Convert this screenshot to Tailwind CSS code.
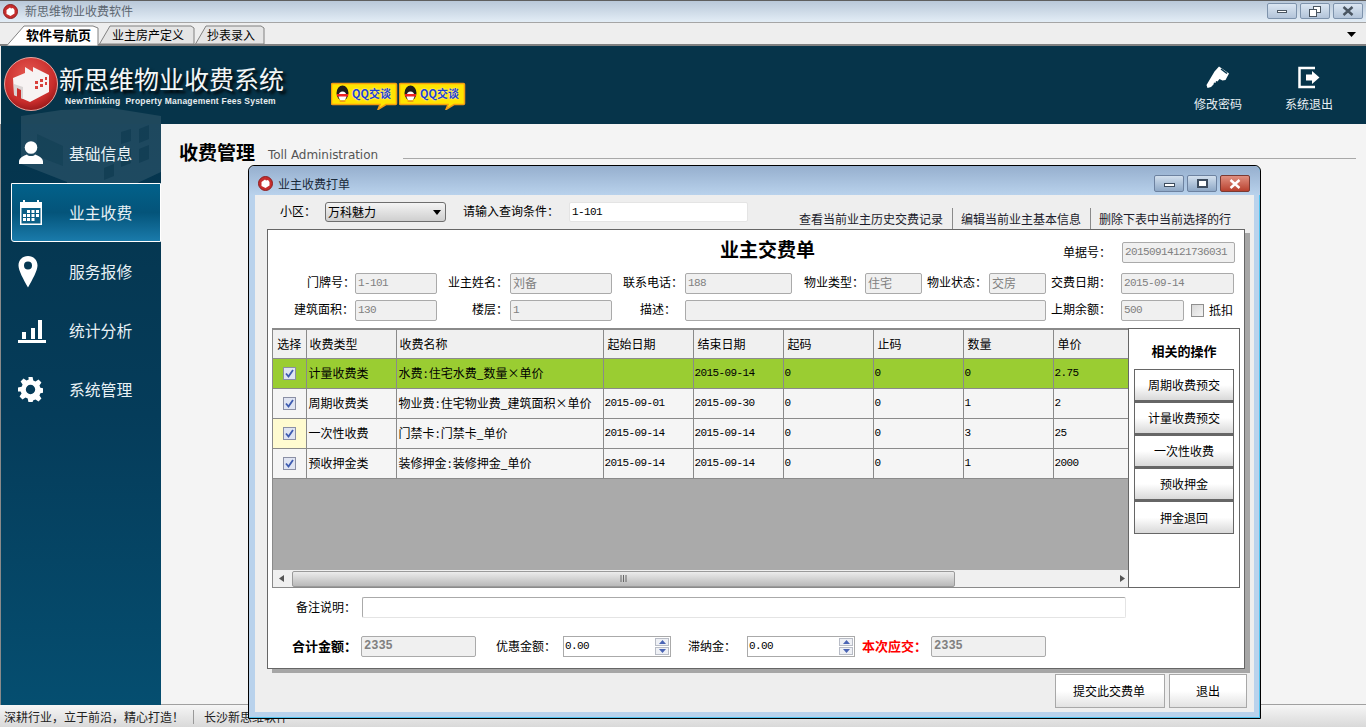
<!DOCTYPE html>
<html lang="zh-CN">
<head>
<meta charset="utf-8">
<title>新思维物业收费软件</title>
<script src="https://cdn.jsdelivr.net/npm/@tailwindcss/browser@4"></script>
</head>
<body class="bg-[#eeeeee]">
<div class="relative w-[1366px] h-[727px] overflow-hidden flex flex-col bg-[#eeeeee] text-black text-[12px] leading-[14px] font-['Noto_Sans_CJK_SC','Liberation_Sans',sans-serif]">

  <!-- window title bar -->
  <div class="h-[22px] shrink-0 flex items-center border-t border-[#5f5f5f] bg-gradient-to-b from-[#b9c8d9] to-[#e3edf6]">
    <svg class="ml-[3px] w-[15px] h-[15px]" viewBox="0 0 15 15"><circle cx="7.5" cy="7.5" r="7" fill="#c62d2d" stroke="#8d1f1f"/><path d="M3.5 6L7 3.5l1 1 2-.5 1.5 2v3.5L7.5 12 3.5 10z" fill="#fff"/></svg>
    <span class="ml-[7px] pb-[2px] text-[#5c6670] text-[12px]">新思维物业收费软件</span>
    <div class="ml-auto mr-[3px] flex gap-[3px] -mt-[1px]">
      <div class="w-[30px] h-[16px] flex items-center justify-center rounded-[2px] border border-[#7e93ac] bg-gradient-to-b from-[#dbe6f2] to-[#b3c4d9]"><div class="w-[10px] h-[3px] bg-white border border-[#4a5561]"></div></div>
      <div class="w-[30px] h-[16px] flex items-center justify-center rounded-[2px] border border-[#7e93ac] bg-gradient-to-b from-[#dbe6f2] to-[#b3c4d9]"><svg class="w-[12px] h-[11px]" viewBox="0 0 12 11"><rect x="4.5" y=".5" width="7" height="6" fill="#fff" stroke="#4a5561"/><rect x=".5" y="3.5" width="7" height="7" fill="#fff" stroke="#4a5561"/></svg></div>
      <div class="w-[30px] h-[16px] flex items-center justify-center rounded-[2px] border border-[#7e93ac] bg-gradient-to-b from-[#dbe6f2] to-[#b3c4d9]"><svg class="w-[12px] h-[10px]" viewBox="0 0 12 10"><path d="M1.500 1l9 8M10.500 1l-9 8" stroke="#4a5561" stroke-width="2.400"/></svg></div>
    </div>
  </div>

  <!-- tabs -->
  <div class="h-[24px] shrink-0 flex items-end bg-[#eeeeee] border-t border-[#a5a5a5] border-b-2 border-b-[#808080]">
    <div class="relative w-[93px] h-[19px] ml-[6px] font-bold text-[13px] flex items-center">
      <svg class="absolute left-0 -bottom-[2px] w-[93px] h-[21px]" viewBox="0 0 93 21"><path d="M.5 21L18 1h69l5 2v18z" fill="#fff" stroke="#808080"/></svg>
      <span class="relative ml-[20px]">软件号航页</span>
    </div>
    <div class="relative w-[96px] h-[19px] flex items-center">
      <svg class="absolute left-0 top-0 w-[96px] h-[19px]" viewBox="0 0 96 19"><path d="M.5 19L11 1h81l3 2v16z" fill="#e5e5e5" stroke="#808080"/></svg>
      <span class="relative ml-[13px]">业主房产定义</span>
    </div>
    <div class="relative w-[70px] h-[19px] flex items-center">
      <svg class="absolute left-0 top-0 w-[70px] h-[19px]" viewBox="0 0 70 19"><path d="M.5 19L11 1h55l3 2v16z" fill="#e5e5e5" stroke="#808080"/></svg>
      <span class="relative ml-[12px]">抄表录入</span>
    </div>
    <svg class="ml-auto mr-[10px] mb-[7px] w-[9px] h-[5px]" viewBox="0 0 9 5"><path d="M0 0h9L4.500 5z" fill="#000"/></svg>
  </div>

  <!-- header + body background -->
  <div class="relative flex-1 flex flex-col min-h-0">
    <header class="relative z-10 h-[78px] shrink-0 ml-[1px] bg-[#06344a] flex">
      <svg class="absolute left-0 top-[56px] w-[160px] h-[22px]" viewBox="0 0 160 22"><path d="M20 22V14L60 8l50-2 50 8v8z" fill="#fff" fill-opacity=".1"/></svg>
      <svg class="relative ml-[2px] mt-[10px] w-[56px] h-[56px]" viewBox="0 0 56 56">
        <defs><radialGradient id="lg" cx=".45" cy=".35" r=".7"><stop offset="0" stop-color="#e65a52"/><stop offset=".7" stop-color="#c92d2c"/><stop offset="1" stop-color="#8e1416"/></radialGradient></defs>
        <circle cx="28" cy="28" r="26.500" fill="url(#lg)" stroke="#e9a6a0"/>
        <path d="M10 22l12-5v-6l8 5v-5l16 8v17L27 46 11 39z" fill="#f7f3f3"/>
        <path d="M11 39V28l9 3v12z" fill="#d9d4d4"/><path d="M14 41v-9l4 2v9z" fill="#c92d2c"/>
        <g fill="#d8403c"><rect x="32" y="25" width="3" height="3"/><rect x="37" y="23" width="3" height="3"/><rect x="42" y="21" width="2" height="3"/><rect x="32" y="30" width="3" height="3"/><rect x="37" y="28" width="3" height="3"/><rect x="42" y="26" width="2" height="3"/></g>
      </svg>
      <div class="relative w-[261px]">
        <div class="mt-[15px] text-[25px] leading-[34px] text-[#f3f6f7] [text-shadow:3px_3px_3px_#000]">新思维物业收费系统</div>
        <div class="ml-[6px] mt-[1px] text-[8.500px] leading-[11px] tracking-[.22px] font-bold whitespace-pre text-[#e6edf0] font-['Liberation_Sans',sans-serif]">NewThinking  Property Management Fees System</div>
      </div>

      <div class="relative ml-[11px] mt-[36px] flex h-[28px]">
        <div class="relative w-[68px] h-[28px]">
          <svg class="absolute inset-0 w-[68px] h-[28px]" viewBox="0 0 68 28"><path d="M1.500 1.500h63a1 1 0 0 1 1 1v19a1 1 0 0 1-1 1H55l-8 5 2-5H1.500a1 1 0 0 1-1-1v-19a1 1 0 0 1 1-1z" fill="#ffe400" stroke="#f39c12" stroke-width="1.500"/><ellipse cx="11.500" cy="11" rx="6" ry="7.500" fill="#1c1c1c"/><ellipse cx="11.500" cy="14" rx="4" ry="4.500" fill="#fff"/><path d="M6 12h11v2.500H6z" fill="#e22"/><path d="M8 18.500h7l-1 1.500H9z" fill="#f39c12"/></svg>
          <span class="absolute left-[21px] top-[5px] text-[11px] leading-[13px] font-bold text-[#1f3fd0] [text-shadow:0_0_2px_#fff]">QQ交谈</span>
        </div>
        <div class="relative w-[68px] h-[28px]">
          <svg class="absolute inset-0 w-[68px] h-[28px]" viewBox="0 0 68 28"><path d="M1.500 1.500h63a1 1 0 0 1 1 1v19a1 1 0 0 1-1 1H55l-8 5 2-5H1.500a1 1 0 0 1-1-1v-19a1 1 0 0 1 1-1z" fill="#ffe400" stroke="#f39c12" stroke-width="1.500"/><ellipse cx="11.500" cy="11" rx="6" ry="7.500" fill="#1c1c1c"/><ellipse cx="11.500" cy="14" rx="4" ry="4.500" fill="#fff"/><path d="M6 12h11v2.500H6z" fill="#e22"/><path d="M8 18.500h7l-1 1.500H9z" fill="#f39c12"/></svg>
          <span class="absolute left-[21px] top-[5px] text-[11px] leading-[13px] font-bold text-[#1f3fd0] [text-shadow:0_0_2px_#fff]">QQ交谈</span>
        </div>
      </div>

      <div class="ml-auto mr-[33px] flex gap-[43px] text-[#e8eff3]">
        <div class="w-[48px] flex flex-col items-center">
          <svg class="mt-[19px] w-[24px] h-[24px]" viewBox="0 0 24 24"><path d="M8.500 6.500L13 1.500l10 7-3.500 6.500-3 .5-3-1.500-2 2.500-1.500-.5-.5 2-1.500-.5-.5 2-2.500 2.500L1.500 23 .5 20z" fill="#fff"/><path d="M15 4l6 4.500" stroke="#06344a" stroke-width="1.500"/></svg>
          <span class="mt-[8px]">修改密码</span>
        </div>
        <div class="w-[48px] flex flex-col items-center">
          <svg class="mt-[19px] w-[24px] h-[24px]" viewBox="0 0 24 24"><path d="M18 3H2.500v19H18" fill="none" stroke="#fff" stroke-width="2.500"/><path d="M9 9.500h6V6l7.500 6.500L15 19v-3.500H9z" fill="#fff"/></svg>
          <span class="mt-[8px]">系统退出</span>
        </div>
      </div>
    </header>

    <div class="flex-1 flex min-h-0">
      <!-- sidebar -->
      <aside class="relative w-[161px] shrink-0 border-l border-[#8a8a8a] bg-gradient-to-b from-[#05344c] via-[#053c5a] to-[#054e70] text-[15.800px] leading-[20px] text-[#e8f1f5]">
        <svg class="absolute left-0 top-0 w-[160px] h-[80px]" viewBox="0 0 160 80"><path d="M20 0h140v48L100 76 66 62V58L20 40z" fill="#fff" fill-opacity=".1"/><g fill="#06344a" fill-opacity=".45"><path d="M36 10l26 12v20l-26-10z" fill-opacity=".3"/><path d="M103 44l10-4v12l-10 4zM120 29l10-4v14l-10 4zM138 5l10-4v14l-10 4zM120 8l10-3v12l-10 3zM138 25l10-4v14l-10 4z"/></g></svg>
        <nav class="relative flex flex-col">
          <a class="h-[59px] flex items-center">
            <svg class="ml-[17px] w-[26px] h-[24px] -mt-[1px]" viewBox="0 0 26 24"><circle cx="13" cy="6.500" r="6.300" fill="#fff"/><path d="M1 23v-2.500C1 17 6 14.500 9 13.500c1 2 7 2 8 0 3 1 8 3.500 8 7V23z" fill="#fff"/></svg>
            <span class="ml-[25px]">基础信息</span>
          </a>
          <a class="ml-[10px] h-[59px] flex items-center border border-white rounded-bl-[3px] bg-gradient-to-b from-[#02618a] via-[#04547a] to-[#1a7bab]">
            <svg class="ml-[7px] w-[24px] h-[25px]" viewBox="0 0 24 25"><path d="M1 2h3V0h2v2h12V0h2v2h3v23H1z" fill="#fff"/><rect x="2.500" y="8" width="19" height="15.500" fill="#0b5f86"/><g fill="#fff"><rect x="8" y="10" width="3" height="3"/><rect x="12.500" y="10" width="3" height="3"/><rect x="17" y="10" width="3" height="3"/><rect x="4" y="14" width="3" height="3"/><rect x="8" y="14" width="3" height="3"/><rect x="12.500" y="14" width="3" height="3"/><rect x="17" y="14" width="3" height="3"/><rect x="4" y="18" width="3" height="3"/><rect x="8" y="18" width="3" height="3"/><rect x="12.500" y="18" width="3" height="3"/></g></svg>
            <span class="ml-[26px]">业主收费</span>
          </a>
          <a class="h-[59px] flex items-center">
            <svg class="ml-[17px] w-[20px] h-[32px]" viewBox="0 0 20 32"><path fill-rule="evenodd" d="M10 0c5.500 0 9.500 4 9.500 9.500 0 5-5 14-9.500 22C5.500 23.500.500 14.500.500 9.500.500 4 4.500 0 10 0zm0 5.500a4 4 0 1 0 0 8 4 4 0 0 0 0-8z" fill="#fff"/></svg>
            <span class="ml-[31px]">服务报修</span>
          </a>
          <a class="h-[59px] flex items-center">
            <svg class="ml-[17px] w-[29px] h-[24px]" viewBox="0 0 29 24"><path d="M4 13h4v7H4zM13 9h4v11h-4zM20 1h4v19h-4z" fill="#fff"/><rect y="21" width="28" height="3" fill="#fff"/></svg>
            <span class="ml-[22px]">统计分析</span>
          </a>
          <a class="h-[59px] flex items-center">
            <svg class="ml-[17px] w-[25px] h-[25px]" viewBox="0 0 24 24"><path fill-rule="evenodd" d="M10 0h4l.7 3.400 2.100.9L19.700 2.400l2.800 2.800-1.900 2.900.9 2.100 3.500.7v4l-3.500.7-.9 2.100 1.900 2.900-2.800 2.800-2.900-1.900-2.100.9L14 24h-4l-.7-3.400-2.100-.9-2.900 1.900-2.800-2.800 1.900-2.900-.9-2.100L0 14v-4l3.500-.7.900-2.100-1.900-2.900 2.800-2.800 2.900 1.900 2.100-.9zM12 7.500a4.500 4.500 0 1 0 0 9 4.500 4.500 0 0 0 0-9z" fill="#fff"/></svg>
            <span class="ml-[26px]">系统管理</span>
          </a>
        </nav>
      </aside>

      <!-- content area -->
      <main class="flex-1 min-w-0 bg-[#f4f4f4] border-b border-[#a0a0a0] pt-[16px] pl-[18px] pr-[10px] flex items-start">
        <h1 class="font-bold text-[19px] leading-[24px] shrink-0">收费管理</h1>
        <span class="ml-[13px] mt-[7px] text-[12px] leading-[16px] text-[#555] tracking-[-.05px] font-['DejaVu_Sans',sans-serif] shrink-0">Toll Administration</span>
        <div class="ml-[25px] mt-[18px] flex-1 h-px bg-[#a8a8a8]"></div>
      </main>
    </div>

    <!-- status bar -->
    <footer class="h-[22px] shrink-0 flex items-center pl-[4px] pt-[1px] bg-gradient-to-b from-[#f6f6f6] to-[#d9d9d9] text-[#222]">
      <span>深耕行业，立于前沿，精心打造！</span>
      <span class="ml-[9px] w-px h-[14px] bg-[#999]"></span>
      <span class="ml-[10px]">长沙新思维软件</span>
    </footer>
  </div>

  <!-- dialog window -->
  <section class="absolute left-[248px] top-[165px] w-[1013px] h-[554px] z-20 flex flex-col border border-black rounded-t-[6px] bg-[#b9d2ec] shadow-[inset_-1px_-1px_0_#4fc3ef]">
    <div class="h-[29px] shrink-0 flex items-center pt-[6px] rounded-t-[6px] bg-gradient-to-b from-[#96afce] to-[#b9d2ec]">
      <svg class="ml-[9px] w-[15px] h-[15px]" viewBox="0 0 15 15"><circle cx="7.500" cy="7.500" r="7" fill="#c62d2d" stroke="#8d1f1f"/><path d="M3.500 6L7 3.500l1 1 2-.5 1.500 2v3.500L7.500 12 3.500 10z" fill="#fff"/></svg>
      <span class="ml-[5px] text-[#1a2a3a]">业主收费打单</span>
      <div class="ml-auto mr-[10px] flex gap-[3px]">
        <div class="w-[30px] h-[17px] flex items-center justify-center rounded-[2px] border border-[#6d82a0] bg-gradient-to-b from-[#d3e0ee] to-[#8ea8c6]"><div class="w-[11px] h-[4px] mt-[3px] bg-white border border-[#3d4c5e]"></div></div>
        <div class="w-[30px] h-[17px] flex items-center justify-center rounded-[2px] border border-[#6d82a0] bg-gradient-to-b from-[#d3e0ee] to-[#8ea8c6]"><div class="w-[11px] h-[9px] bg-white border-2 border-[#3d4c5e] flex items-center justify-center"></div></div>
        <div class="w-[30px] h-[17px] flex items-center justify-center rounded-[2px] border border-[#7b3a33] bg-gradient-to-b from-[#e08f80] to-[#b8402e]"><svg class="w-[12px] h-[10px]" viewBox="0 0 12 10"><path d="M1.500 1l9 8M10.500 1l-9 8" stroke="#fff" stroke-width="2.400"/></svg></div>
      </div>
    </div>

    <div class="mx-[6px] h-[517px] shrink-0 bg-[#eeeeee] flex flex-col">
      <!-- toolbar -->
      <div class="h-[34px] shrink-0 flex items-start pl-[25px]">
        <span class="mt-[9px] w-[45px]">小区：</span>
        <div class="mt-[7px] w-[121px] h-[20px] flex items-center rounded-[3px] border border-[#6e6e6e] bg-gradient-to-b from-[#f4f4f4] to-[#cfcfcf] pl-[2px]">
          <span>万科魅力</span>
          <svg class="ml-auto mr-[4px] w-[8px] h-[5px]" viewBox="0 0 8 5"><path d="M0 0h8L4 5z" fill="#000"/></svg>
        </div>
        <span class="mt-[9px] ml-[17px] w-[106px]">请输入查询条件：</span>
        <div class="mt-[7px] w-[179px] h-[20px] bg-white rounded-[2px] border border-[#e4e4e4] flex items-center pl-[2px]"><span class="font-['Liberation_Mono',monospace] text-[11px] tracking-[-.6px]">1-101</span></div>
        <div class="ml-auto mr-[23px] mt-[13px] h-[21px] flex items-center text-[#1b1b2b]">
          <span>查看当前业主历史交费记录</span>
          <span class="ml-[9px] mr-[8px] w-px h-[21px] bg-[#8a8a8a]"></span>
          <span>编辑当前业主基本信息</span>
          <span class="ml-[9px] mr-[8px] w-px h-[21px] bg-[#8a8a8a]"></span>
          <span>删除下表中当前选择的行</span>
        </div>
      </div>

      <!-- sheet -->
      <div class="ml-[12px] w-[978px] h-[440px] shrink-0 bg-white border border-[#666] shadow-[5px_4px_0_#a6a6a6] flex flex-col">
        <div class="mt-[12px] h-[21px] flex items-center shrink-0">
          <h2 class="ml-[452px] font-bold text-[19px] leading-[20px] -mt-[7px] whitespace-nowrap">业主交费单</h2>
          <span class="ml-auto -mt-[2px]">单据号：</span>
          <div class="ml-[11px] mr-[9px] w-[113px] h-[21px] pb-[2px] bg-[#f0f0f0] border border-[#aaa] rounded-[2px] flex items-center pl-[2px] text-[#808080] font-['Liberation_Mono',monospace] text-[11px] tracking-[-.6px]">20150914121736031</div>
        </div>

        <!-- fields -->
        <div class="mt-[10px] grid grid-cols-[87px_82px_73px_102px_73px_107px_73px_57px_67px_57px_75px_113px] grid-rows-[21px_21px] gap-y-[6px] shrink-0 items-center whitespace-nowrap">
          <span class="-mt-[3px] text-right pr-[0px]">门牌号：</span>
          <div class="h-[21px] pb-[2px] bg-[#f0f0f0] border border-[#aaa] rounded-[2px] flex items-center pl-[2px] text-[#808080] font-['Liberation_Mono',monospace] text-[11px] tracking-[-.6px]">1-101</div>
          <span class="-mt-[3px] text-right pr-[2px]">业主姓名：</span>
          <div class="h-[21px] pb-[2px] bg-[#f0f0f0] border border-[#aaa] rounded-[2px] flex items-center pl-[2px] text-[#808080]">刘备</div>
          <span class="-mt-[3px] text-right pr-[2px]">联系电话：</span>
          <div class="h-[21px] pb-[2px] bg-[#f0f0f0] border border-[#aaa] rounded-[2px] flex items-center pl-[2px] text-[#808080] font-['Liberation_Mono',monospace] text-[11px] tracking-[-.6px]">188</div>
          <span class="-mt-[3px] text-right pr-[1px]">物业类型：</span>
          <div class="h-[21px] pb-[2px] bg-[#f0f0f0] border border-[#aaa] rounded-[2px] flex items-center pl-[2px] text-[#808080]">住宅</div>
          <span class="-mt-[3px] text-right pr-[2px]">物业状态：</span>
          <div class="h-[21px] pb-[2px] bg-[#f0f0f0] border border-[#aaa] rounded-[2px] flex items-center pl-[2px] text-[#808080]">交房</div>
          <span class="-mt-[3px] text-right pr-[10px]">交费日期：</span>
          <div class="h-[21px] pb-[2px] bg-[#f0f0f0] border border-[#aaa] rounded-[2px] flex items-center pl-[2px] text-[#808080] font-['Liberation_Mono',monospace] text-[11px] tracking-[-.6px]">2015-09-14</div>

          <span class="-mt-[3px] text-right pr-[1px]">建筑面积：</span>
          <div class="h-[21px] pb-[2px] bg-[#f0f0f0] border border-[#aaa] rounded-[2px] flex items-center pl-[2px] text-[#808080] font-['Liberation_Mono',monospace] text-[11px] tracking-[-.6px]">130</div>
          <span class="-mt-[3px] text-right pr-[2px]">楼层：</span>
          <div class="h-[21px] pb-[2px] bg-[#f0f0f0] border border-[#aaa] rounded-[2px] flex items-center pl-[2px] text-[#808080] font-['Liberation_Mono',monospace] text-[11px] tracking-[-.6px]">1</div>
          <span class="-mt-[3px] text-right pr-[9px]">描述：</span>
          <div class="col-span-5 h-[21px] bg-[#f0f0f0] border border-[#aaa] rounded-[2px]"></div>
          <span class="-mt-[3px] col-start-11 text-right pr-[10px]">上期余额：</span>
          <div class="flex items-center">
            <div class="w-[63px] h-[21px] pb-[2px] bg-[#f0f0f0] border border-[#aaa] rounded-[2px] flex items-center pl-[2px] text-[#808080] font-['Liberation_Mono',monospace] text-[11px] tracking-[-.6px]">500</div>
            <div class="ml-[7px] w-[13px] h-[13px] border border-[#8f8f8f] bg-gradient-to-br from-[#d8d8d8] to-[#f4f4f4]"></div>
            <span class="ml-[5px] -mt-[2px]">抵扣</span>
          </div>
        </div>

        <!-- grid and side panel -->
        <div class="mt-[7px] ml-[4px] h-[260px] shrink-0 flex">
          <div class="w-[856px] h-[260px] flex flex-col border-t-2 border-l border-b border-[#8a8a8a] bg-[#aaaaaa]">
            <table class="table-fixed border-collapse w-[855px] shrink-0">
              <colgroup><col class="w-[33px]"><col class="w-[90px]"><col class="w-[207px]"><col class="w-[90px]"><col class="w-[90px]"><col class="w-[90px]"><col class="w-[90px]"><col class="w-[90px]"><col class="w-[75px]"></colgroup>
              <thead>
                <tr class="h-[28px] bg-[#f0f0f0] text-left">
                  <th class="font-normal border border-[#8a8a8a] border-t-0 border-l-0 text-center">选择</th>
                  <th class="font-normal border border-[#8a8a8a] border-t-0 pl-[3px]">收费类型</th>
                  <th class="font-normal border border-[#8a8a8a] border-t-0 pl-[3px]">收费名称</th>
                  <th class="font-normal border border-[#8a8a8a] border-t-0 pl-[4px]">起始日期</th>
                  <th class="font-normal border border-[#8a8a8a] border-t-0 pl-[4px]">结束日期</th>
                  <th class="font-normal border border-[#8a8a8a] border-t-0 pl-[4px]">起码</th>
                  <th class="font-normal border border-[#8a8a8a] border-t-0 pl-[4px]">止码</th>
                  <th class="font-normal border border-[#8a8a8a] border-t-0 pl-[4px]">数量</th>
                  <th class="font-normal border border-[#8a8a8a] border-t-0 border-r-0 pl-[4px]">单价</th>
                </tr>
              </thead>
              <tbody>
                <tr class="h-[30px] bg-[#9acd32]">
                  <td class="border border-[#8a8a8a] border-l-0"><svg class="mx-auto w-[13px] h-[13px]" viewBox="0 0 13 13"><rect x=".5" y=".5" width="12" height="12" fill="#dfe4f2" stroke="#8a8fa5"/><path d="M3 6.500l2.500 3L10 3" fill="none" stroke="#3d5bb0" stroke-width="1.800"/></svg></td>
                  <td class="border border-[#8a8a8a] pl-[2px]">计量收费类</td>
                  <td class="border border-[#8a8a8a] pl-[2px] whitespace-nowrap">水费<span class="mx-[1.5px]">:</span>住宅水费_数量×单价</td>
                  <td class="border border-[#8a8a8a]"></td>
                  <td class="border border-[#8a8a8a] pl-[1px] font-['Liberation_Mono',monospace] text-[11px] tracking-[-.6px]">2015-09-14</td>
                  <td class="border border-[#8a8a8a] pl-[1px] font-['Liberation_Mono',monospace] text-[11px] tracking-[-.6px]">0</td>
                  <td class="border border-[#8a8a8a] pl-[1px] font-['Liberation_Mono',monospace] text-[11px] tracking-[-.6px]">0</td>
                  <td class="border border-[#8a8a8a] pl-[1px] font-['Liberation_Mono',monospace] text-[11px] tracking-[-.6px]">0</td>
                  <td class="border border-[#8a8a8a] border-r-0 pl-[1px] font-['Liberation_Mono',monospace] text-[11px] tracking-[-.6px]">2.75</td>
                </tr>
                <tr class="h-[30px] bg-[#f5f5f5]">
                  <td class="border border-[#8a8a8a] border-l-0"><svg class="mx-auto w-[13px] h-[13px]" viewBox="0 0 13 13"><rect x=".5" y=".5" width="12" height="12" fill="#dfe4f2" stroke="#8a8fa5"/><path d="M3 6.500l2.500 3L10 3" fill="none" stroke="#3d5bb0" stroke-width="1.800"/></svg></td>
                  <td class="border border-[#8a8a8a] pl-[2px]">周期收费类</td>
                  <td class="border border-[#8a8a8a] pl-[2px] whitespace-nowrap">物业费<span class="mx-[1.5px]">:</span>住宅物业费_建筑面积×单价</td>
                  <td class="border border-[#8a8a8a] pl-[1px] font-['Liberation_Mono',monospace] text-[11px] tracking-[-.6px]">2015-09-01</td>
                  <td class="border border-[#8a8a8a] pl-[1px] font-['Liberation_Mono',monospace] text-[11px] tracking-[-.6px]">2015-09-30</td>
                  <td class="border border-[#8a8a8a] pl-[1px] font-['Liberation_Mono',monospace] text-[11px] tracking-[-.6px]">0</td>
                  <td class="border border-[#8a8a8a] pl-[1px] font-['Liberation_Mono',monospace] text-[11px] tracking-[-.6px]">0</td>
                  <td class="border border-[#8a8a8a] pl-[1px] font-['Liberation_Mono',monospace] text-[11px] tracking-[-.6px]">1</td>
                  <td class="border border-[#8a8a8a] border-r-0 pl-[1px] font-['Liberation_Mono',monospace] text-[11px] tracking-[-.6px]">2</td>
                </tr>
                <tr class="h-[30px] bg-[#f5f5f5]">
                  <td class="border border-[#8a8a8a] border-l-0 bg-[#fffbd0]"><svg class="mx-auto w-[13px] h-[13px]" viewBox="0 0 13 13"><rect x=".5" y=".5" width="12" height="12" fill="#dfe4f2" stroke="#8a8fa5"/><path d="M3 6.500l2.500 3L10 3" fill="none" stroke="#3d5bb0" stroke-width="1.800"/></svg></td>
                  <td class="border border-[#8a8a8a] pl-[2px]">一次性收费</td>
                  <td class="border border-[#8a8a8a] pl-[2px] whitespace-nowrap">门禁卡<span class="mx-[1.5px]">:</span>门禁卡_单价</td>
                  <td class="border border-[#8a8a8a] pl-[1px] font-['Liberation_Mono',monospace] text-[11px] tracking-[-.6px]">2015-09-14</td>
                  <td class="border border-[#8a8a8a] pl-[1px] font-['Liberation_Mono',monospace] text-[11px] tracking-[-.6px]">2015-09-14</td>
                  <td class="border border-[#8a8a8a] pl-[1px] font-['Liberation_Mono',monospace] text-[11px] tracking-[-.6px]">0</td>
                  <td class="border border-[#8a8a8a] pl-[1px] font-['Liberation_Mono',monospace] text-[11px] tracking-[-.6px]">0</td>
                  <td class="border border-[#8a8a8a] pl-[1px] font-['Liberation_Mono',monospace] text-[11px] tracking-[-.6px]">3</td>
                  <td class="border border-[#8a8a8a] border-r-0 pl-[1px] font-['Liberation_Mono',monospace] text-[11px] tracking-[-.6px]">25</td>
                </tr>
                <tr class="h-[30px] bg-[#f5f5f5]">
                  <td class="border border-[#8a8a8a] border-l-0"><svg class="mx-auto w-[13px] h-[13px]" viewBox="0 0 13 13"><rect x=".5" y=".5" width="12" height="12" fill="#dfe4f2" stroke="#8a8fa5"/><path d="M3 6.500l2.500 3L10 3" fill="none" stroke="#3d5bb0" stroke-width="1.800"/></svg></td>
                  <td class="border border-[#8a8a8a] pl-[2px]">预收押金类</td>
                  <td class="border border-[#8a8a8a] pl-[2px] whitespace-nowrap">装修押金<span class="mx-[1.5px]">:</span>装修押金_单价</td>
                  <td class="border border-[#8a8a8a] pl-[1px] font-['Liberation_Mono',monospace] text-[11px] tracking-[-.6px]">2015-09-14</td>
                  <td class="border border-[#8a8a8a] pl-[1px] font-['Liberation_Mono',monospace] text-[11px] tracking-[-.6px]">2015-09-14</td>
                  <td class="border border-[#8a8a8a] pl-[1px] font-['Liberation_Mono',monospace] text-[11px] tracking-[-.6px]">0</td>
                  <td class="border border-[#8a8a8a] pl-[1px] font-['Liberation_Mono',monospace] text-[11px] tracking-[-.6px]">0</td>
                  <td class="border border-[#8a8a8a] pl-[1px] font-['Liberation_Mono',monospace] text-[11px] tracking-[-.6px]">1</td>
                  <td class="border border-[#8a8a8a] border-r-0 pl-[1px] font-['Liberation_Mono',monospace] text-[11px] tracking-[-.6px]">2000</td>
                </tr>
              </tbody>
            </table>
            <!-- scrollbar -->
            <div class="mt-auto h-[17px] w-[855px] shrink-0 flex items-center bg-[#f0f0f0]">
              <svg class="ml-[6px] w-[5px] h-[7px]" viewBox="0 0 5 7"><path d="M5 0v7L0 3.500z" fill="#555"/></svg>
              <div class="ml-[8px] w-[663px] h-[16px] flex items-center justify-center rounded-[2px] border border-[#9a9a9a] bg-gradient-to-b from-[#ececec] to-[#b9b9b9]"><svg class="w-[8px] h-[7px]" viewBox="0 0 8 7"><path d="M1 0v7M3.500 0v7M6 0v7" stroke="#666"/></svg></div>
              <svg class="ml-[165px] w-[5px] h-[7px]" viewBox="0 0 5 7"><path d="M0 0v7l5-3.500z" fill="#555"/></svg>
            </div>
          </div>

          <div class="w-[112px] h-[260px] bg-white border border-[#666] flex flex-col items-center">
            <div class="mt-[15px] mb-[11px] font-bold text-[13px] leading-[14px]">相关的操作</div>
            <div class="w-[100px] h-[33px] shrink-0 flex items-center justify-center border border-[#666] border-b-2 bg-gradient-to-b from-white via-white to-[#d9d9d9]">周期收费预交</div>
            <div class="w-[100px] h-[33px] shrink-0 flex items-center justify-center border border-[#666] border-b-2 bg-gradient-to-b from-white via-white to-[#d9d9d9]">计量收费预交</div>
            <div class="w-[100px] h-[33px] shrink-0 flex items-center justify-center border border-[#666] border-b-2 bg-gradient-to-b from-white via-white to-[#d9d9d9]">一次性收费</div>
            <div class="w-[100px] h-[33px] shrink-0 flex items-center justify-center border border-[#666] border-b-2 bg-gradient-to-b from-white via-white to-[#d9d9d9]">预收押金</div>
            <div class="w-[100px] h-[33px] shrink-0 flex items-center justify-center border border-[#666] bg-gradient-to-b from-white via-white to-[#d9d9d9]">押金退回</div>
          </div>
        </div>

        <!-- remark -->
        <div class="mt-[9px] h-[21px] shrink-0 flex items-center pl-[28px]">
          <span class="w-[66px] -mt-[2px]">备注说明：</span>
          <div class="w-[764px] h-[21px] bg-white rounded-[2px] border border-[#aaa] border-r-[#e4e4e4] border-b-[#e4e4e4]"></div>
        </div>

        <!-- totals -->
        <div class="mt-[18px] h-[21px] shrink-0 flex items-center pl-[24px]">
          <span class="w-[69px] -mt-[2px] font-bold text-[13px] whitespace-nowrap">合计金额：</span>
          <div class="w-[115px] h-[21px] pb-[2px] bg-[#f0f0f0] border border-[#aaa] rounded-[2px] flex items-center pl-[2px] text-[#808080] font-bold font-['Liberation_Mono',monospace] text-[12px]">2335</div>
          <span class="ml-[20px] -mt-[2px] w-[67px]">优惠金额：</span>
          <div class="w-[108px] h-[21px] bg-white border border-[#aaa] flex items-center pl-[1px] font-['Liberation_Mono',monospace] text-[11px] tracking-[-.6px]">
            <span class="-mt-[2px]">0.00</span>
            <div class="ml-auto mr-[1px] w-[14px] h-[17px] flex flex-col gap-px">
              <div class="flex-1 flex items-center justify-center border border-[#b8bcc6] bg-[#eef0f5]"><svg class="w-[7px] h-[4px]" viewBox="0 0 7 4"><path d="M0 4h7L3.500 0z" fill="#4a64b4"/></svg></div>
              <div class="flex-1 flex items-center justify-center border border-[#b8bcc6] bg-[#eef0f5]"><svg class="w-[7px] h-[4px]" viewBox="0 0 7 4"><path d="M0 0h7L3.500 4z" fill="#4a64b4"/></svg></div>
            </div>
          </div>
          <span class="ml-[17px] -mt-[2px] w-[59px]">滞纳金：</span>
          <div class="w-[108px] h-[21px] bg-white border border-[#aaa] flex items-center pl-[1px] font-['Liberation_Mono',monospace] text-[11px] tracking-[-.6px]">
            <span class="-mt-[2px]">0.00</span>
            <div class="ml-auto mr-[1px] w-[14px] h-[17px] flex flex-col gap-px">
              <div class="flex-1 flex items-center justify-center border border-[#b8bcc6] bg-[#eef0f5]"><svg class="w-[7px] h-[4px]" viewBox="0 0 7 4"><path d="M0 4h7L3.500 0z" fill="#4a64b4"/></svg></div>
              <div class="flex-1 flex items-center justify-center border border-[#b8bcc6] bg-[#eef0f5]"><svg class="w-[7px] h-[4px]" viewBox="0 0 7 4"><path d="M0 0h7L3.500 4z" fill="#4a64b4"/></svg></div>
            </div>
          </div>
          <span class="ml-[7px] -mt-[2px] w-[69px] font-bold text-[13px] text-[#ff0000] whitespace-nowrap">本次应交：</span>
          <div class="w-[115px] h-[21px] pb-[2px] bg-[#f0f0f0] border border-[#aaa] rounded-[2px] flex items-center pl-[2px] text-[#808080] font-bold font-['Liberation_Mono',monospace] text-[12px]">2335</div>
        </div>
      </div>

      <!-- footer buttons -->
      <div class="mt-[5px] mr-[7px] flex justify-end gap-[4px]">
        <div class="w-[110px] h-[34px] pr-[2px] flex items-center justify-center border border-[#a8a8a8] bg-gradient-to-b from-white via-white to-[#e2e2e2]">提交此交费单</div>
        <div class="w-[78px] h-[34px] flex items-center justify-center border border-[#a8a8a8] bg-gradient-to-b from-white via-white to-[#e2e2e2]">退出</div>
      </div>
    </div>
  </section>
</div>
</body>
</html>
